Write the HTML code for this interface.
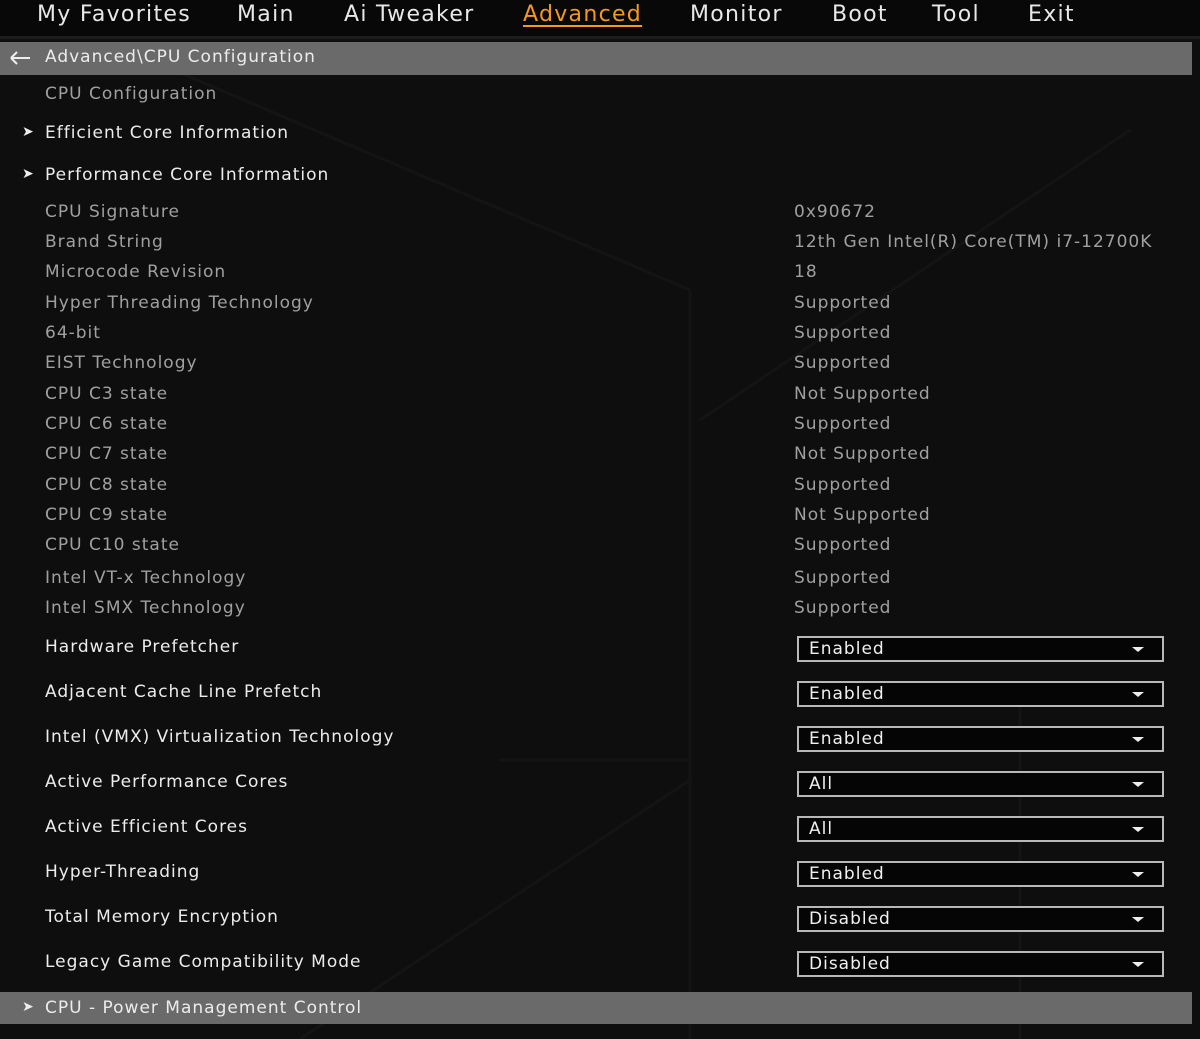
<!DOCTYPE html>
<html><head><meta charset="utf-8"><style>
body{margin:0;width:1200px;height:1039px;background:#0e0e0e;overflow:hidden;position:relative;font-family:"DejaVu Sans","Liberation Sans",sans-serif;}
.t{position:absolute;line-height:20px;height:20px;white-space:nowrap;font-size:17px;letter-spacing:1px}
.nav{position:absolute;top:0;left:0;width:1200px;height:36px;background:#080808;border-bottom:3px solid #1c1c1c}
.nav span{position:absolute;top:2px;font-size:22px;color:#e8e8e8;letter-spacing:1.3px}
.bar{position:absolute;left:0;width:1192px;background:#6a6a6a}
.g{color:#a0a0a0}.w{color:#ececec}
.dd{position:absolute;left:797px;width:363px;height:22px;border:2px solid #b8b8b8;background:#050505}
.dd span{position:absolute;left:10px;top:0;line-height:22px;color:#f0f0f0;font-size:17px;letter-spacing:1px}
.dd i{position:absolute;right:18px;top:9px;border-left:6px solid transparent;border-right:6px solid transparent;border-top:5px solid #eee}
.ar{position:absolute;left:22px;color:#eee;font-size:14px}
</style></head><body>
<svg style="position:absolute;left:0;top:0" width="1200" height="1039"><g stroke="#141414" stroke-width="3" fill="none"><line x1="150" y1="60" x2="690" y2="290"/><line x1="690" y1="290" x2="690" y2="1039"/><line x1="500" y1="760" x2="690" y2="760"/><line x1="1130" y1="130" x2="700" y2="420"/><line x1="1020" y1="700" x2="1020" y2="1039"/><line x1="300" y1="1039" x2="690" y2="780"/></g></svg>
<div class="nav">
<span style="left:37px">My Favorites</span><span style="left:237px">Main</span><span style="left:344px">Ai Tweaker</span><span style="left:523px;color:#f39a1c;text-decoration:underline;text-underline-offset:4px">Advanced</span><span style="left:690px">Monitor</span><span style="left:832px">Boot</span><span style="left:932px">Tool</span><span style="left:1028px">Exit</span>
</div>
<div class="bar" style="top:42px;height:33px"></div>
<svg style="position:absolute;left:9px;top:50px" width="24" height="16"><path d="M2 8H21M2 8L8 2M2 8L8 14" stroke="#eee" stroke-width="2" fill="none"/></svg>
<div class="t w" style="left:45px;top:47px">Advanced\CPU Configuration</div>
<div class="t g" style="left:45px;top:84px">CPU Configuration</div>
<div class="ar" style="top:124px">➤</div><div class="t w" style="left:45px;top:123px">Efficient Core Information</div>
<div class="ar" style="top:166px">➤</div><div class="t w" style="left:45px;top:165px">Performance Core Information</div>
<div class="t g" style="left:45px;top:202px">CPU Signature</div><div class="t g" style="left:794px;top:202px">0x90672</div>
<div class="t g" style="left:45px;top:232px">Brand String</div><div class="t g" style="left:794px;top:232px">12th Gen Intel(R) Core(TM) i7-12700K</div>
<div class="t g" style="left:45px;top:262px">Microcode Revision</div><div class="t g" style="left:794px;top:262px">18</div>
<div class="t g" style="left:45px;top:293px">Hyper Threading Technology</div><div class="t g" style="left:794px;top:293px">Supported</div>
<div class="t g" style="left:45px;top:323px">64-bit</div><div class="t g" style="left:794px;top:323px">Supported</div>
<div class="t g" style="left:45px;top:353px">EIST Technology</div><div class="t g" style="left:794px;top:353px">Supported</div>
<div class="t g" style="left:45px;top:384px">CPU C3 state</div><div class="t g" style="left:794px;top:384px">Not Supported</div>
<div class="t g" style="left:45px;top:414px">CPU C6 state</div><div class="t g" style="left:794px;top:414px">Supported</div>
<div class="t g" style="left:45px;top:444px">CPU C7 state</div><div class="t g" style="left:794px;top:444px">Not Supported</div>
<div class="t g" style="left:45px;top:475px">CPU C8 state</div><div class="t g" style="left:794px;top:475px">Supported</div>
<div class="t g" style="left:45px;top:505px">CPU C9 state</div><div class="t g" style="left:794px;top:505px">Not Supported</div>
<div class="t g" style="left:45px;top:535px">CPU C10 state</div><div class="t g" style="left:794px;top:535px">Supported</div>
<div class="t g" style="left:45px;top:568px">Intel VT-x Technology</div><div class="t g" style="left:794px;top:568px">Supported</div>
<div class="t g" style="left:45px;top:598px">Intel SMX Technology</div><div class="t g" style="left:794px;top:598px">Supported</div>
<div class="t w" style="left:45px;top:637px">Hardware Prefetcher</div><div class="dd" style="top:636px"><span>Enabled</span><i></i></div>
<div class="t w" style="left:45px;top:682px">Adjacent Cache Line Prefetch</div><div class="dd" style="top:681px"><span>Enabled</span><i></i></div>
<div class="t w" style="left:45px;top:727px">Intel (VMX) Virtualization Technology</div><div class="dd" style="top:726px"><span>Enabled</span><i></i></div>
<div class="t w" style="left:45px;top:772px">Active Performance Cores</div><div class="dd" style="top:771px"><span>All</span><i></i></div>
<div class="t w" style="left:45px;top:817px">Active Efficient Cores</div><div class="dd" style="top:816px"><span>All</span><i></i></div>
<div class="t w" style="left:45px;top:862px">Hyper-Threading</div><div class="dd" style="top:861px"><span>Enabled</span><i></i></div>
<div class="t w" style="left:45px;top:907px">Total Memory Encryption</div><div class="dd" style="top:906px"><span>Disabled</span><i></i></div>
<div class="t w" style="left:45px;top:952px">Legacy Game Compatibility Mode</div><div class="dd" style="top:951px"><span>Disabled</span><i></i></div>
<div class="bar" style="top:992px;height:32px"></div>
<div class="ar" style="top:999px">➤</div><div class="t w" style="left:45px;top:998px">CPU - Power Management Control</div>
</body></html>
